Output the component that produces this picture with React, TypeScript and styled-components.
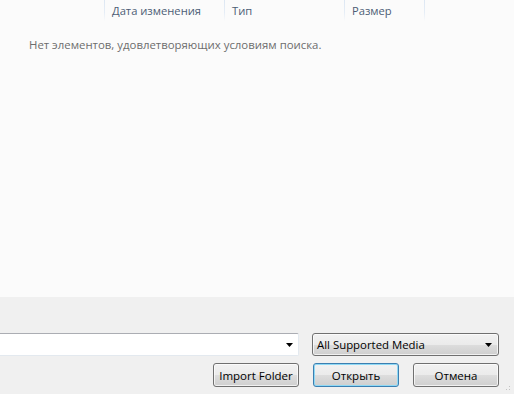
import React from "react";
import styled, { createGlobalStyle } from "styled-components";

const Global = createGlobalStyle`
  html, body { margin: 0; padding: 0; }
  body { width: 514px; height: 394px; overflow: hidden; font-family: "Open Sans", "Noto Sans", sans-serif; }
  #root { width: 514px; height: 394px; }
`;

const Window = styled.div`
  width: 514px;
  height: 394px;
  display: flex;
  flex-direction: column;
  overflow: hidden;
`;

const ListArea = styled.div`
  flex: 1;
  background: #fbfbfb;
  display: flex;
  flex-direction: column;
`;

const Header = styled.div`
  display: flex;
  height: 21px;
`;

const HeaderCell = styled.div<{ $w: number }>`
  width: ${(p) => p.$w}px;
  box-sizing: border-box;
  padding-left: 7px;
  font-size: 11.2px;
  line-height: 21px;
  color: #4c5d75;
  position: relative;
  white-space: nowrap;
  &::after {
    content: "";
    position: absolute;
    right: 0;
    top: 0;
    bottom: 0;
    width: 1px;
    background: linear-gradient(#dde7f3, #e6edf6 60%, rgba(230, 237, 246, 0));
  }
`;

const Empty = styled.div`
  padding: 16px 0 0 29px;
  font-size: 11.4px;
  line-height: 16px;
  color: #6d6d6d;
`;

const Panel = styled.div`
  height: 97px;
  background: #f0f0f0;
  box-sizing: border-box;
  padding: 36px 15px 0 0;
  display: flex;
  flex-direction: column;
  gap: 7px;
  position: relative;
`;

const Row = styled.div`
  display: flex;
  justify-content: flex-end;
  align-items: center;
`;

const FileInput = styled.div`
  flex: 1;
  height: 23px;
  box-sizing: border-box;
  margin-left: -4px;
  margin-right: 13px;
  background: #fff;
  border: 1px solid #e3e9ef;
  border-top-color: #abadb3;
  border-radius: 2px;
  display: flex;
  align-items: center;
  justify-content: flex-end;
  padding-right: 5px;
`;

const Arrow = () => (
  <svg width="7" height="4" viewBox="0 0 7 4">
    <path d="M0 0H7L3.5 4Z" fill="#000" />
  </svg>
);

const Combo = styled.div`
  width: 187px;
  height: 23px;
  box-sizing: border-box;
  border: 1px solid #707070;
  border-radius: 3px;
  background: linear-gradient(#f2f2f2 0%, #ebebeb 50%, #dddddd 51%, #cfcfcf 100%);
  box-shadow: inset 0 0 0 1px rgba(255, 255, 255, 0.7);
  display: flex;
  align-items: center;
  justify-content: space-between;
  padding: 0 6px 0 4px;
  font-size: 11.4px;
  color: #000;
`;

const Button = styled.div<{ $default?: boolean }>`
  width: 86px;
  height: 24px;
  box-sizing: border-box;
  border: 1px solid ${(p) => (p.$default ? "#3c7fb1" : "#707070")};
  border-radius: 3px;
  background: linear-gradient(#f2f2f2 0%, #ebebeb 50%, #dddddd 51%, #cfcfcf 100%);
  box-shadow: inset 0 0 0 1px ${(p) => (p.$default ? "#8fd9f5" : "rgba(255,255,255,0.7)")};
  display: flex;
  align-items: center;
  justify-content: center;
  font-size: 11.5px;
  color: #000;
  & + & {
    margin-left: 14px;
  }
`;

const Grip = styled.div`
  position: absolute;
  right: 2px;
  bottom: 2px;
  width: 10px;
  height: 10px;
  background-image: radial-gradient(circle, #b8b8b8 0.8px, transparent 1px);
  background-size: 3px 3px;
  clip-path: polygon(100% 0, 100% 100%, 0 100%);
  opacity: 0.8;
`;

export default function App() {
  return (
    <Window>
      <Global />
      <ListArea>
        <Header>
          <HeaderCell $w={105} />
          <HeaderCell $w={120}>Дата изменения</HeaderCell>
          <HeaderCell $w={120}>Тип</HeaderCell>
          <HeaderCell $w={80}>Размер</HeaderCell>
        </Header>
        <Empty>Нет элементов, удовлетворяющих условиям поиска.</Empty>
      </ListArea>
      <Panel>
        <Row>
          <FileInput>
            <Arrow />
          </FileInput>
          <Combo>
            <span>All Supported Media</span>
            <Arrow />
          </Combo>
        </Row>
        <Row>
          <Button>Import Folder</Button>
          <Button $default>Открыть</Button>
          <Button>Отмена</Button>
        </Row>
        <Grip />
      </Panel>
    </Window>
  );
}
